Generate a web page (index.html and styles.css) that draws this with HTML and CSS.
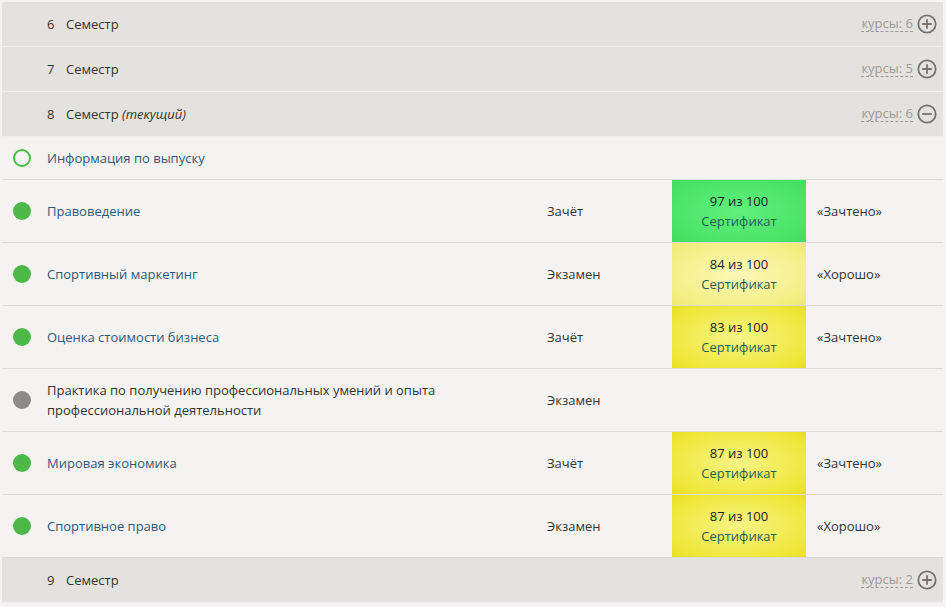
FILE: index.html
```html
<!DOCTYPE html>
<html lang="ru">
<head>
<meta charset="utf-8">
<link rel="stylesheet" href="styles.css">
</head>
<body>
<div class="list">
  <div class="sem">
    <span class="num">6</span><span class="title">Семестр</span>
    <span class="count">курсы: 6</span>
    <svg class="toggle" viewBox="0 0 20 20"><circle cx="10" cy="10" r="8.7"/><path d="M10 5.2v9.6M5.2 10h9.6"/></svg>
  </div>
  <div class="sem">
    <span class="num">7</span><span class="title">Семестр</span>
    <span class="count">курсы: 5</span>
    <svg class="toggle" viewBox="0 0 20 20"><circle cx="10" cy="10" r="8.7"/><path d="M10 5.2v9.6M5.2 10h9.6"/></svg>
  </div>
  <div class="sem">
    <span class="num">8</span><span class="title">Семестр <i>(текущий)</i></span>
    <span class="count">курсы: 6</span>
    <svg class="toggle" viewBox="0 0 20 20"><circle cx="10" cy="10" r="8.7"/><path d="M5.2 10h9.6"/></svg>
  </div>

  <div class="info">
    <span class="dot ring"></span>
    <a class="name">Информация по выпуску</a>
  </div>

  <div class="course">
    <span class="dot"></span>
    <a class="name">Правоведение</a>
    <span class="type">Зачёт</span>
    <div class="score green"><span>97 из 100</span><a>Сертификат</a></div>
    <span class="result">«Зачтено»</span>
  </div>
  <div class="course">
    <span class="dot"></span>
    <a class="name">Спортивный маркетинг</a>
    <span class="type">Экзамен</span>
    <div class="score pale"><span>84 из 100</span><a>Сертификат</a></div>
    <span class="result">«Хорошо»</span>
  </div>
  <div class="course">
    <span class="dot"></span>
    <a class="name">Оценка стоимости бизнеса</a>
    <span class="type">Зачёт</span>
    <div class="score yellow"><span>83 из 100</span><a>Сертификат</a></div>
    <span class="result">«Зачтено»</span>
  </div>
  <div class="course">
    <span class="dot grey"></span>
    <span class="name plain">Практика по получению профессиональных умений и опыта профессиональной деятельности</span>
    <span class="type">Экзамен</span>
    <div class="score none"></div>
    <span class="result"></span>
  </div>
  <div class="course">
    <span class="dot"></span>
    <a class="name">Мировая экономика</a>
    <span class="type">Зачёт</span>
    <div class="score yellow"><span>87 из 100</span><a>Сертификат</a></div>
    <span class="result">«Зачтено»</span>
  </div>
  <div class="course">
    <span class="dot"></span>
    <a class="name">Спортивное право</a>
    <span class="type">Экзамен</span>
    <div class="score yellow"><span>87 из 100</span><a>Сертификат</a></div>
    <span class="result">«Хорошо»</span>
  </div>

  <div class="sem">
    <span class="num">9</span><span class="title">Семестр</span>
    <span class="count">курсы: 2</span>
    <svg class="toggle" viewBox="0 0 20 20"><circle cx="10" cy="10" r="8.7"/><path d="M10 5.2v9.6M5.2 10h9.6"/></svg>
  </div>
</div>
</body>
</html>
```
FILE: styles.css
```css
html, body {
  margin: 0;
  padding: 0;
  background: #f4f3f1;
  font-family: "Open Sans", "Noto Sans", sans-serif;
  font-size: 13px;
  color: #333;
}

.list {
  margin: 2px 3px 0 2px;
  display: flex;
  flex-direction: column;
}

.sem {
  height: 44px;
  background: #e3e2df;
  border-bottom: 1px solid #f1f0ee;
  display: flex;
  align-items: center;
  padding: 0 6px 0 45px;
}
.sem .num { width: 19px; }
.sem .title { flex: 1; }
.sem i { font-style: italic; }
.sem .count {
  color: #9a9a9a;
  border-bottom: 1px dashed #9a9a9a;
  line-height: 15px;
  margin-right: 4px;
}
.toggle {
  width: 20px;
  height: 20px;
  fill: none;
  stroke: #737373;
  stroke-width: 1.8;
}

.info {
  height: 42px;
  display: flex;
  align-items: center;
  border-bottom: 1px solid #dcdbd9;
  background: #f4f3f1;
}

.dot {
  width: 18px;
  height: 18px;
  border-radius: 50%;
  background: #4cb848;
  margin: 0 16px 0 11px;
  flex: none;
  box-sizing: border-box;
}
.dot.ring {
  background: transparent;
  border: 2px solid #4cb848;
}
.dot.grey { background: #8c8b8a; }

.name {
  color: #2b5a7d;
  text-decoration: none;
}
.name.plain { color: #333; line-height: 20px; }

.course {
  height: 62px;
  display: grid;
  grid-template-columns: 45px 500px 125px 134px 1fr;
  align-items: center;
  border-bottom: 1px solid #dcdbd9;
  background: #f4f3f1;
}
.course .dot { margin: 0 0 0 11px; }
.course .name { padding-right: 90px; }
.course .type { color: #333; }
.course .result { padding-left: 11px; color: #333; }

.score {
  align-self: stretch;
  display: flex;
  flex-direction: column;
  justify-content: center;
  align-items: center;
  line-height: 20px;
  color: #222;
}
.score a { color: #1f5e5a; }
.score.green {
  background: radial-gradient(ellipse at center, #62f07e 0%, #4ce468 70%, #44dd60 100%);
}
.score.yellow {
  background: radial-gradient(ellipse at center, #f6f386 0%, #efe83c 75%, #e8df22 100%);
}
.score.pale {
  background: radial-gradient(ellipse at center, #fbf8b8 0%, #f5ef86 75%, #f0e870 100%);
}
.score.none { background: transparent; }

.course:last-of-type { border-bottom: none; }
```
